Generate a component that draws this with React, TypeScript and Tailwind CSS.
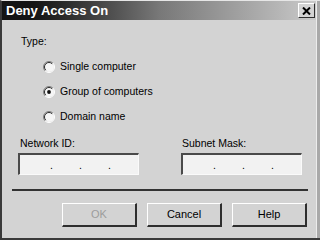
import React from 'react';

const font = { fontFamily: '"Liberation Sans", Arial, sans-serif' };

function Radio({ checked }: { checked?: boolean }) {
  return (
    <svg width="12" height="12" viewBox="0 0 12 12" className="shrink-0">
      <circle cx="6" cy="6" r="5" fill="#f6f6f6" />
      <path d="M2.1 9.9 A5.5 5.5 0 0 1 9.9 2.1" fill="none" stroke="#808080" strokeWidth="1" />
      <path d="M2.8 9.2 A4.5 4.5 0 0 1 9.2 2.8" fill="none" stroke="#2a2a2a" strokeWidth="1" />
      <path d="M9.9 2.1 A5.5 5.5 0 0 1 2.1 9.9" fill="none" stroke="#ffffff" strokeWidth="1" />
      {checked && <circle cx="6" cy="6" r="1.9" fill="#111" />}
    </svg>
  );
}

function IpBox() {
  return (
    <div className="w-[121px] h-[22px] bg-[#f2f2f2] border-t-2 border-l-2 border-[#4a4a4a] border-b border-r border-b-[#fafafa] border-r-[#fafafa] flex items-center pl-[30px] text-[10.5px] text-black">
      <span className="w-[29px] pt-[3px]">.</span>
      <span className="w-[29px] pt-[3px]">.</span>
      <span className="w-[29px] pt-[3px]">.</span>
    </div>
  );
}

function Button({ label, disabled }: { label: string; disabled?: boolean }) {
  return (
    <div
      className={`w-[75px] h-[24px] flex items-center justify-center bg-[#d3d3d3] border-t border-l border-t-white border-l-white border-b-2 border-r-2 border-b-[#2e2e2e] border-r-[#2e2e2e] text-[11px] ${
        disabled ? 'text-[#9c9c9c]' : 'text-black'
      }`}
    >
      {label}
    </div>
  );
}

export default function App() {
  return (
    <div
      style={font}
      className="w-[320px] h-[240px] bg-[#d3d3d3] flex flex-col border-l-2 border-b-2 border-[#3a3a3a] border-t border-t-[#e6e6e6] overflow-hidden"
    >
      <div className="flex flex-1">
        <div className="flex-1 flex flex-col">
          {/* title bar */}
          <div className="h-[19px] flex items-center justify-between bg-gradient-to-r from-[#141414] from-[10%] via-[#787878] to-[#cacaca] pl-[4px] pr-[1px]">
            <span className="text-white font-bold text-[13px] leading-none">Deny Access On</span>
            <div className="w-[17px] h-[15px] bg-[#d3d3d3] border-t border-l border-t-white border-l-white border-b border-r border-b-[#2e2e2e] border-r-[#2e2e2e] flex items-center justify-center">
              <svg width="9" height="8" viewBox="0 0 9 8">
                <path d="M1 0.5 L8 7.5 M8 0.5 L1 7.5" stroke="#000" strokeWidth="2" />
              </svg>
            </div>
          </div>

          {/* body */}
          <div className="flex flex-col text-[10.5px] text-black">
            <div className="mt-[15px] ml-[19px] leading-[12px]">Type:</div>
            <div className="mt-[7px] flex flex-col ml-[41px]">
              <div className="h-[25px] flex items-center gap-[5px]">
                <Radio />
                <span>Single computer</span>
              </div>
              <div className="h-[25px] flex items-center gap-[5px]">
                <Radio checked />
                <span>Group of computers</span>
              </div>
              <div className="h-[25px] flex items-center gap-[5px]">
                <Radio />
                <span>Domain name</span>
              </div>
            </div>

            <div className="mt-[8px] ml-[16px] flex gap-[42px]">
              <div className="flex flex-col w-[121px]">
                <span className="leading-[12px] ml-[2px]">Network ID:</span>
                <div className="mt-[4px]">
                  <IpBox />
                </div>
              </div>
              <div className="flex flex-col w-[121px]">
                <span className="leading-[12px] ml-[1px]">Subnet Mask:</span>
                <div className="mt-[4px]">
                  <IpBox />
                </div>
              </div>
            </div>

            <div className="mt-[14px] ml-[10px] w-[296px] h-[2px] bg-[#333333]" />

            <div className="mt-[12px] ml-[60px] flex gap-[10px]">
              <Button label="OK" disabled />
              <Button label="Cancel" />
              <Button label="Help" />
            </div>
          </div>
        </div>
        <div className="w-[1px] bg-[#ececec]" />
        <div className="w-[3px] bg-[#a9a9a9]" />
      </div>
    </div>
  );
}
